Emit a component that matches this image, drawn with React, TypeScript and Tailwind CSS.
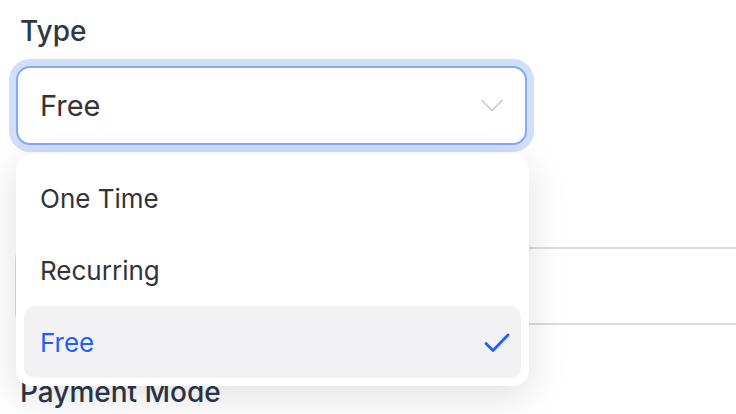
import React from 'react';

const options = ['One Time', 'Recurring', 'Free'];

function Chevron() {
  return (
    <svg width="22" height="13" viewBox="0 0 22 13" fill="none" className="shrink-0">
      <path d="M1 1.5l10 10 10-10" stroke="#c6c6c8" strokeWidth="1.6" strokeLinecap="round" strokeLinejoin="round" />
    </svg>
  );
}

function Check() {
  return (
    <svg width="26" height="21" viewBox="0 0 26 21" fill="none" className="shrink-0">
      <path d="M2 11.5l7 7L24 3" stroke="#1d5fff" strokeWidth="2.8" strokeLinecap="round" strokeLinejoin="round" />
    </svg>
  );
}

export default function App() {
  const selected = 'Free';
  return (
    <div className="relative w-[736px] h-[414px] overflow-hidden bg-white font-['Inter',sans-serif]">
      <div className="flex flex-col pl-4">
        <label className="mt-[11px] pl-1 text-[28px] leading-[40px] font-medium text-[#2d3748]">Type</label>

        <div className="mt-[15px] w-[511px] h-[79px] rounded-[14px] border-2 border-[#86a9f6] ring-[7px] ring-[#d0dffc] bg-white flex items-center justify-between pl-[22px] pr-[22px]">
          <span className="text-[29px] text-[#333338]">{selected}</span>
          <Chevron />
        </div>

        <div className="mt-[102px] -ml-px w-[800px] h-[78px] rounded-[12px] border-2 border-[#dcdce0] bg-white" />

        <label className="mt-[47px] pl-1 text-[28px] leading-[40px] font-medium text-[#2d3748]">Payment Mode</label>
      </div>

      <div className="absolute left-4 top-[154px] w-[513px] rounded-[16px] bg-white p-2 shadow-[0_10px_40px_rgba(0,0,0,0.13)]">
        {options.map((o) => {
          const active = o === selected;
          return (
            <div
              key={o}
              className={`h-[72px] flex items-center justify-between pl-4 pr-[11px] rounded-[10px] text-[26px] ${
                active ? 'bg-[#f2f2f5] text-[#1d5fff]' : 'text-[#333338]'
              }`}
            >
              <span>{o}</span>
              {active && <Check />}
            </div>
          );
        })}
      </div>
    </div>
  );
}
